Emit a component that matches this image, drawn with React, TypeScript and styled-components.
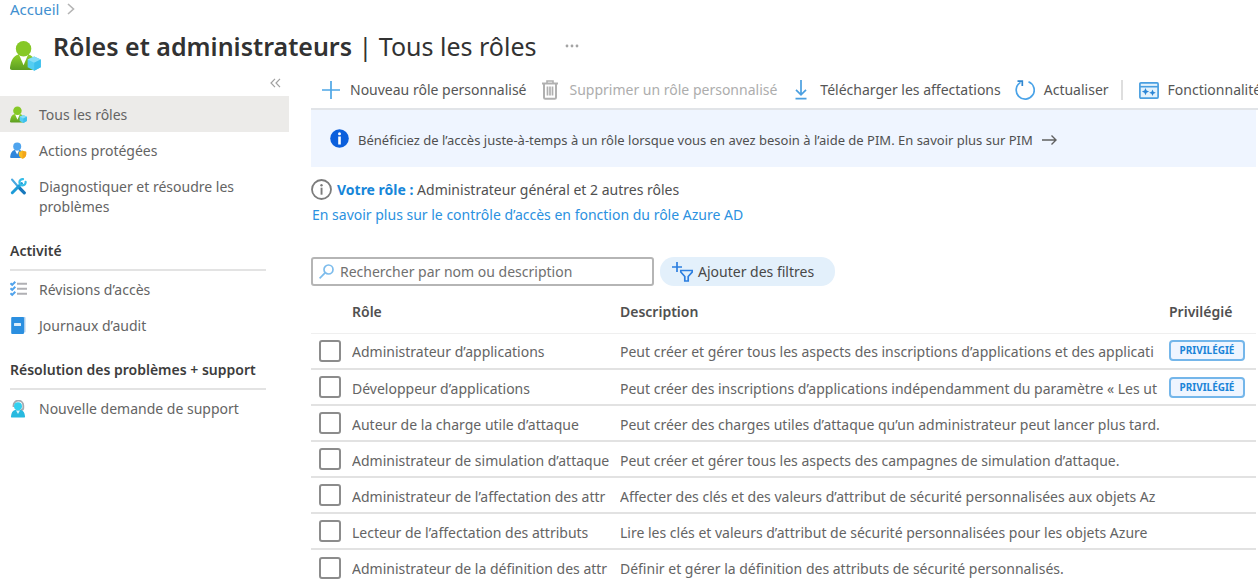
import React from "react";
import styled, { createGlobalStyle } from "styled-components";

const GlobalStyle = createGlobalStyle`
  *, *::before, *::after { box-sizing: border-box; }
  body {
    margin: 0;
    background: #fff;
    color: #646464;
    font-family: "Noto Sans", "Open Sans", sans-serif;
    font-size: 14px;
    line-height: 20px;
  }
  button, input { font: inherit; color: inherit; }
  svg { display: block; flex: none; }
`;

const Page = styled.div`
  overflow: hidden;
`;

const Breadcrumb = styled.nav`
  display: flex;
  align-items: center;
  gap: 8px;
  height: 18px;
  padding-left: 10px;
  font-size: 15px;
`;

const CrumbLink = styled.a`
  color: #4190d0;
  text-decoration: none;
`;

const Header = styled.header`
  display: flex;
  align-items: center;
  height: 56px;
  padding-left: 10px;
`;

const HeaderIcon = styled.span`
  padding-top: 18px;
  margin-right: 12px;
`;

const Title = styled.h1`
  margin: 0;
  color: #323232;
  font-size: 25px;
  line-height: 36px;
  font-weight: 400;
  white-space: nowrap;
`;

const TitleStrong = styled.strong`
  font-weight: 600;
`;

const IconButton = styled.button`
  display: flex;
  padding: 0;
  border: 0;
  background: none;
`;

const MoreButton = styled(IconButton)`
  margin-left: 28px;
`;

const Columns = styled.div`
  display: grid;
  grid-template-columns: 289px minmax(0, 1fr);
  column-gap: 22px;
`;

const Sidebar = styled.aside`
  display: flex;
  flex-direction: column;
`;

const CollapseRow = styled.div`
  display: flex;
  justify-content: flex-end;
  height: 22px;
  padding: 4px 8px 0 0;
`;

const NavList = styled.ul`
  margin: 0;
  padding: 0;
  list-style: none;
`;

const NavLink = styled.a<{ $active?: boolean }>`
  display: flex;
  align-items: flex-start;
  gap: 12px;
  padding: 9px 40px 7px 10px;
  color: #646464;
  text-decoration: none;
  background: ${(p) => (p.$active ? "#ecebe9" : "transparent")};
`;

const NavIcon = styled.span`
  width: 17px;
  padding-top: 1px;
`;

const SectionTitle = styled.h2`
  margin: 7px 23px 0 10px;
  padding: 10px 0 8px;
  border-bottom: 2px solid #e3e3e3;
  color: #3c3c3c;
  font-size: 14px;
  line-height: 20px;
  font-weight: 600;
  white-space: nowrap;
`;

const Main = styled.main`
  min-width: 0;
`;

const Toolbar = styled.div`
  display: flex;
  align-items: center;
  gap: 14px;
  height: 36px;
  padding: 0 0 2px 10px;
  border-bottom: 2px solid #e1e4e8;
  overflow: hidden;
`;

const ToolButton = styled.button`
  display: flex;
  flex: none;
  align-items: center;
  gap: 9px;
  padding: 0;
  border: 0;
  background: none;
  color: #565656;
  white-space: nowrap;
  &:disabled { color: #adadad; }
`;

const ToolIcon = styled.span`
  display: flex;
  justify-content: center;
  width: 20px;
`;

const ToolDivider = styled.span`
  flex: none;
  width: 2px;
  height: 20px;
  margin: 0 2px 0 -2px;
  background: #dedede;
`;

const Banner = styled.div`
  display: flex;
  align-items: center;
  gap: 9px;
  height: 57px;
  margin-right: 2px;
  padding-left: 19px;
  background: #eff5ff;
  color: #505050;
  font-size: 13px;
  white-space: nowrap;
`;

const BannerLink = styled.a`
  display: flex;
  align-items: center;
  gap: 9px;
  padding-top: 2px;
  color: inherit;
  text-decoration: none;
`;

const RoleInfo = styled.p`
  display: flex;
  align-items: center;
  gap: 5px;
  margin: 12px 0 5px;
  color: #505050;
`;

const RoleLabel = styled.strong`
  color: #1686d9;
  font-weight: 700;
`;

const LearnLink = styled.a`
  display: block;
  width: fit-content;
  margin-left: 1px;
  color: #2b91e0;
  text-decoration: none;
`;

const Filters = styled.div`
  display: flex;
  gap: 6px;
  margin-top: 32px;
`;

const SearchBox = styled.div`
  display: flex;
  align-items: center;
  gap: 6px;
  width: 343px;
  height: 29px;
  padding: 0 6px;
  border: 2px solid #b5b5b5;
  border-radius: 3px;
`;

const SearchInput = styled.input`
  flex: 1;
  min-width: 0;
  padding: 0;
  border: 0;
  outline: 0;
  background: none;
  &::placeholder { color: #707070; opacity: 1; }
`;

const FilterButton = styled.button`
  display: flex;
  align-items: center;
  gap: 5px;
  width: 175px;
  height: 29px;
  padding: 0 12px;
  border: 0;
  border-radius: 14px;
  background: #e3f0fb;
  color: #484848;
  white-space: nowrap;
`;

const RolesTable = styled.table`
  width: calc(100% - 2px);
  margin-top: 8px;
  border-collapse: collapse;
  table-layout: fixed;
`;

const HeadCell = styled.th<{ $width?: string }>`
  width: ${(p) => p.$width ?? "auto"};
  height: 39px;
  padding: 0 0 2px;
  border-bottom: 1px solid #efefef;
  color: #505050;
  font-weight: 600;
  text-align: left;
`;

const Cell = styled.td`
  height: 36px;
  padding: 0;
  border-bottom: 2px solid #e2e2e2;
  overflow: hidden;
  white-space: nowrap;
  tr:last-child > & { border-bottom: 0; }
`;

const TextCell = styled(Cell)`
  padding-top: 3px;
`;

const Checkbox = styled.input`
  appearance: none;
  display: block;
  width: 22px;
  height: 22px;
  margin: 0 0 0 8px;
  border: 2px solid #8c8c8c;
  border-radius: 3px;
  background: #fff;
  &:checked { background: #1686d9; }
`;

const Badge = styled.span`
  display: block;
  width: 76px;
  height: 21px;
  border: 2px solid #74b6ea;
  border-radius: 4px;
  background: #eff5ff;
  color: #1b84d8;
  font-size: 10px;
  line-height: 17px;
  font-weight: 700;
  text-align: center;
`;

function PersonCubeIcon({ size }: { size: number }) {
  const id = `green${size}`;
  return (
    <svg width={size} height={size} viewBox="0 0 32 32" aria-hidden="true">
      <defs>
        <linearGradient id={id} x1="0" y1="0" x2="0" y2="1">
          <stop offset="0" stopColor="#8fd02a" />
          <stop offset="1" stopColor="#5c9e22" />
        </linearGradient>
      </defs>
      <path d="M2 31c-1.600 0-2.200-1-2-2.500C1 21 3.500 16 9 15h10c5 1 7 6 8 13 .3 2-.5 3-2 3z" fill={`url(#${id})`} />
      <path d="M9.500 15.500 14 26l4.500-10.500z" fill="#fff" />
      <circle cx="14" cy="9" r="8" fill="#86c826" />
      <path d="M25 17 31.800 20.200v8L25 31.800l-6.800-3.600v-8z" fill="#54cdf2" />
      <path d="M25 17l6.800 3.200L25 23.500l-6.800-3.300z" fill="#86dcf6" />
      <path d="M25 23.500l6.800-3.300v8L25 31.800z" fill="#3cbfec" />
    </svg>
  );
}

function PersonShieldIcon() {
  return (
    <svg width="17" height="17" viewBox="0 0 17 17" aria-hidden="true">
      <path d="M1.500 16C.5 16 0 15.400.2 14.400.7 11 2 8.600 4.500 8h5.300c2.500.6 3.700 3 4.200 6.400V16z" fill="#2f86dc" />
      <path d="M5 8.300 7.100 12.500 9.300 8.300z" fill="#fff" />
      <circle cx="7.200" cy="4.500" r="4" fill="#4fa4ee" />
      <path d="M12.500 8.600c1 .8 2.200 1.100 3.700 1.100v2.800c0 2-1.500 3.300-3.700 4.300-2.200-1-3.700-2.300-3.700-4.300V9.700c1.500 0 2.700-.3 3.700-1.100z" fill="#fbbd1f" />
      <path d="M12.500 8.600c1 .8 2.200 1.100 3.700 1.100v2.800c0 2-1.500 3.300-3.700 4.300z" fill="#f2a51a" />
    </svg>
  );
}

function ToolsIcon() {
  return (
    <svg width="17" height="17" viewBox="0 0 17 17" fill="none" strokeLinecap="round" aria-hidden="true">
      <path d="M2 1.500 7.500 8" stroke="#48a8e0" strokeWidth="2" />
      <path d="M9.500 10 14.300 14.800" stroke="#1778bd" strokeWidth="3.200" />
      <path d="M2.300 14.700 11.500 5.500" stroke="#1d9bd8" strokeWidth="3" />
      <path d="M15.600 3.800A3.100 3.100 0 1 1 13 1.200" stroke="#35bde8" strokeWidth="2.200" />
    </svg>
  );
}

function ChecklistIcon() {
  return (
    <svg width="17" height="17" viewBox="0 0 17 17" fill="none" aria-hidden="true">
      <path d="M7 2.800h10M7 7.800h10M7 12.800h10" stroke="#b0b0b4" strokeWidth="2" />
      <path d="m.5 2.300 1.700 1.600L5.300.8M.5 7.300l1.700 1.600 3.100-3.100M.5 12.300l1.700 1.600 3.100-3.100" stroke="#50a3ec" strokeWidth="2" />
    </svg>
  );
}

function BookIcon() {
  return (
    <svg width="17" height="17" viewBox="0 0 17 17" aria-hidden="true">
      <path d="M3 0h11.500c.6 0 1 .4 1 1v13.500c0 .6-.4 1-1 1H3z" fill="#a9cdee" />
      <path d="M2.200 0H13a1 1 0 0 1 1 1v15a1 1 0 0 1-1 1H2.200a1 1 0 0 1-1-1V1a1 1 0 0 1 1-1z" fill="#2b8fe0" />
      <rect x="4" y="6" width="7" height="3" rx=".5" fill="#dceefb" />
    </svg>
  );
}

function SupportIcon() {
  return (
    <svg width="17" height="18" viewBox="0 0 17 18" aria-hidden="true">
      <path d="M3.500 7V5.500a4.500 4.500 0 0 1 9.800 0V8c0 1.300-1 2-2.500 2" fill="none" stroke="#a4aab0" strokeWidth="1.800" />
      <path d="M2 17.500c-.8 0-1.200-.5-1-1.300.5-3.400 1.500-5.700 4-6.200h6c2.500.5 3.500 2.800 4 6.200.2.800-.2 1.300-1 1.300z" fill="#27b9df" />
      <path d="M6 10.500 8 14l2-3.500z" fill="#d8f6fc" />
      <circle cx="8" cy="6.300" r="4" fill="#32d0ef" />
    </svg>
  );
}

type NavEntry = { label: string; icon: React.ReactNode; active?: boolean };

const navItems: Record<"main" | "activity" | "support", NavEntry[]> = {
  main: [
    { label: "Tous les rôles", icon: <PersonCubeIcon size={17} />, active: true },
    { label: "Actions protégées", icon: <PersonShieldIcon /> },
    { label: "Diagnostiquer et résoudre les problèmes", icon: <ToolsIcon /> },
  ],
  activity: [
    { label: "Révisions d’accès", icon: <ChecklistIcon /> },
    { label: "Journaux d’audit", icon: <BookIcon /> },
  ],
  support: [{ label: "Nouvelle demande de support", icon: <SupportIcon /> }],
};

function NavGroup({ items }: { items: NavEntry[] }) {
  return (
    <NavList>
      {items.map((item) => (
        <li key={item.label}>
          <NavLink href="#" $active={item.active} aria-current={item.active ? "page" : undefined}>
            <NavIcon>{item.icon}</NavIcon>
            <span>{item.label}</span>
          </NavLink>
        </li>
      ))}
    </NavList>
  );
}

const roles = [
  { name: "Administrateur d’applications", description: "Peut créer et gérer tous les aspects des inscriptions d’applications et des applicati", privileged: true },
  { name: "Développeur d’applications", description: "Peut créer des inscriptions d’applications indépendamment du paramètre « Les ut", privileged: true },
  { name: "Auteur de la charge utile d’attaque", description: "Peut créer des charges utiles d’attaque qu’un administrateur peut lancer plus tard." },
  { name: "Administrateur de simulation d’attaque", description: "Peut créer et gérer tous les aspects des campagnes de simulation d’attaque." },
  { name: "Administrateur de l’affectation des attr", description: "Affecter des clés et des valeurs d’attribut de sécurité personnalisées aux objets Az" },
  { name: "Lecteur de l’affectation des attributs", description: "Lire les clés et valeurs d’attribut de sécurité personnalisées pour les objets Azure" },
  { name: "Administrateur de la définition des attr", description: "Définir et gérer la définition des attributs de sécurité personnalisés." },
];

export default function App() {
  return (
    <Page>
      <GlobalStyle />
      <Breadcrumb aria-label="Fil d’Ariane">
        <CrumbLink href="#">Accueil</CrumbLink>
        <svg width="8" height="12" viewBox="0 0 8 12" fill="none" stroke="#b4b4b4" strokeWidth="1.600" aria-hidden="true">
          <path d="m1 1 5.500 5L1 11" />
        </svg>
      </Breadcrumb>

      <Header>
        <HeaderIcon><PersonCubeIcon size={31} /></HeaderIcon>
        <Title><TitleStrong>Rôles et administrateurs</TitleStrong> | Tous les rôles</Title>
        <MoreButton aria-label="Plus d’options">
          <svg width="14" height="4" viewBox="0 0 14 4" fill="#a4a4a4"><circle cx="2" cy="2" r="1.400" /><circle cx="7" cy="2" r="1.400" /><circle cx="12" cy="2" r="1.400" /></svg>
        </MoreButton>
      </Header>

      <Columns>
        <Sidebar>
          <CollapseRow>
            <IconButton aria-label="Réduire le menu">
              <svg width="11" height="10" viewBox="0 0 11 10" fill="none" stroke="#a0a0a0" strokeWidth="1.200"><path d="M5 .8 1 5l4 4.200M10 .8 6 5l4 4.200" /></svg>
            </IconButton>
          </CollapseRow>
          <NavGroup items={navItems.main} />
          <SectionTitle>Activité</SectionTitle>
          <NavGroup items={navItems.activity} />
          <SectionTitle>Résolution des problèmes + support</SectionTitle>
          <NavGroup items={navItems.support} />
        </Sidebar>

        <Main>
          <Toolbar role="toolbar">
            <ToolButton>
              <ToolIcon>
                <svg width="18" height="18" viewBox="0 0 18 18" stroke="#4ea6e6" strokeWidth="1.700"><path d="M9 0v18M0 9h18" /></svg>
              </ToolIcon>
              Nouveau rôle personnalisé
            </ToolButton>
            <ToolButton disabled>
              <ToolIcon>
                <svg width="16" height="20" viewBox="0 0 16 20" fill="none" stroke="#b0b0b0">
                  <path d="M0 3.500h16" strokeWidth="2" />
                  <path d="M5 3V1h6v2" strokeWidth="1.600" />
                  <path d="M2 4v13.500c0 .8.500 1.300 1.300 1.300h9.400c.8 0 1.300-.5 1.300-1.300V4" strokeWidth="2" />
                  <path d="M5.500 6.500v9M8 6.500v9M10.500 6.500v9" strokeWidth="1.700" />
                </svg>
              </ToolIcon>
              Supprimer un rôle personnalisé
            </ToolButton>
            <ToolButton>
              <ToolIcon>
                <svg width="12" height="20" viewBox="0 0 12 20" fill="none" stroke="#4a9fe0" strokeWidth="1.700"><path d="M6 0v14.500M1 9.800l5 5 5-5M.5 18.600h11" /></svg>
              </ToolIcon>
              Télécharger les affectations
            </ToolButton>
            <ToolButton>
              <ToolIcon>
                <svg width="20" height="20" viewBox="0 0 20 20" fill="none" stroke="#4aa3e8" strokeWidth="1.700"><path d="M13.500 1.700A9 9 0 1 1 5.500 2.400" /><path d="M2.500 1.200h4.800v4.800" stroke="#2f86d0" /></svg>
              </ToolIcon>
              Actualiser
            </ToolButton>
            <ToolDivider />
            <ToolButton>
              <ToolIcon>
                <svg width="20" height="17" viewBox="0 0 20 17" fill="none">
                  <rect x=".9" y=".9" width="18.200" height="15.200" rx="1" fill="#e4f2fc" stroke="#4a9fe0" strokeWidth="1.700" />
                  <path d="M1 4.700h18" stroke="#4a9fe0" strokeWidth="1.600" />
                  <path d="m6.500 6 1.100 2.500 2.500 1.100-2.500 1.100-1.100 2.500-1.100-2.500-2.500-1.100 2.500-1.100zM13.500 7.500l1 2.300 2.300 1-2.300 1-1 2.300-1-2.300-2.300-1 2.300-1z" fill="#2b86d6" />
                </svg>
              </ToolIcon>
              Fonctionnalité
            </ToolButton>
          </Toolbar>

          <Banner>
            <svg width="19" height="19" viewBox="0 0 19 19" aria-hidden="true">
              <circle cx="9.500" cy="9.500" r="9.300" fill="#0b5fdc" />
              <circle cx="9.500" cy="4.700" r="1.500" fill="#fff" />
              <rect x="8.200" y="7.500" width="2.600" height="8" fill="#fff" />
            </svg>
            <BannerLink href="#">
              Bénéficiez de l’accès juste-à-temps à un rôle lorsque vous en avez besoin à l’aide de PIM. En savoir plus sur PIM
              <svg width="15" height="10" viewBox="0 0 15 10" fill="none" stroke="#606060" strokeWidth="1.400" aria-hidden="true"><path d="M0 5h14M9.500.6 14 5 9.500 9.400" /></svg>
            </BannerLink>
          </Banner>

          <RoleInfo>
            <svg width="21" height="21" viewBox="0 0 21 21" aria-hidden="true">
              <circle cx="10.500" cy="10.500" r="9.500" fill="none" stroke="#7c7c7c" strokeWidth="1.800" />
              <circle cx="10.500" cy="6.300" r="1.200" fill="#7c7c7c" />
              <rect x="9.600" y="8.700" width="1.900" height="7" fill="#7c7c7c" />
            </svg>
            <span><RoleLabel>Votre rôle :</RoleLabel> Administrateur général et 2 autres rôles</span>
          </RoleInfo>
          <LearnLink href="#">En savoir plus sur le contrôle d’accès en fonction du rôle Azure AD</LearnLink>

          <Filters>
            <SearchBox>
              <svg width="15" height="15" viewBox="0 0 15 15" fill="none" stroke="#7dbcec" strokeWidth="1.700" aria-hidden="true"><circle cx="9.500" cy="5.500" r="4.500" /><path d="M6.300 8.700.6 14.400" /></svg>
              <SearchInput type="text" aria-label="Rechercher" placeholder="Rechercher par nom ou description" />
            </SearchBox>
            <FilterButton>
              <svg width="21" height="20" viewBox="0 0 21 20" fill="none" stroke="#2d7fe0" strokeWidth="1.700" aria-hidden="true"><path d="M5 0v10M0 5h10" /><path d="M8.800 8.500h11.400v1.500l-4 4.500v4.500h-3.400v-4.500l-4-4.500z" /></svg>
              Ajouter des filtres
            </FilterButton>
          </Filters>

          <RolesTable>
            <thead>
              <tr>
                <HeadCell $width="41px" aria-label="Sélection" />
                <HeadCell $width="268px">Rôle</HeadCell>
                <HeadCell>Description</HeadCell>
                <HeadCell $width="87px">Privilégié</HeadCell>
              </tr>
            </thead>
            <tbody>
              {roles.map((role) => (
                <tr key={role.name}>
                  <Cell><Checkbox type="checkbox" aria-label={role.name} /></Cell>
                  <TextCell>{role.name}</TextCell>
                  <TextCell>{role.description}</TextCell>
                  <Cell>{role.privileged && <Badge>PRIVILÉGIÉ</Badge>}</Cell>
                </tr>
              ))}
            </tbody>
          </RolesTable>
        </Main>
      </Columns>
    </Page>
  );
}
